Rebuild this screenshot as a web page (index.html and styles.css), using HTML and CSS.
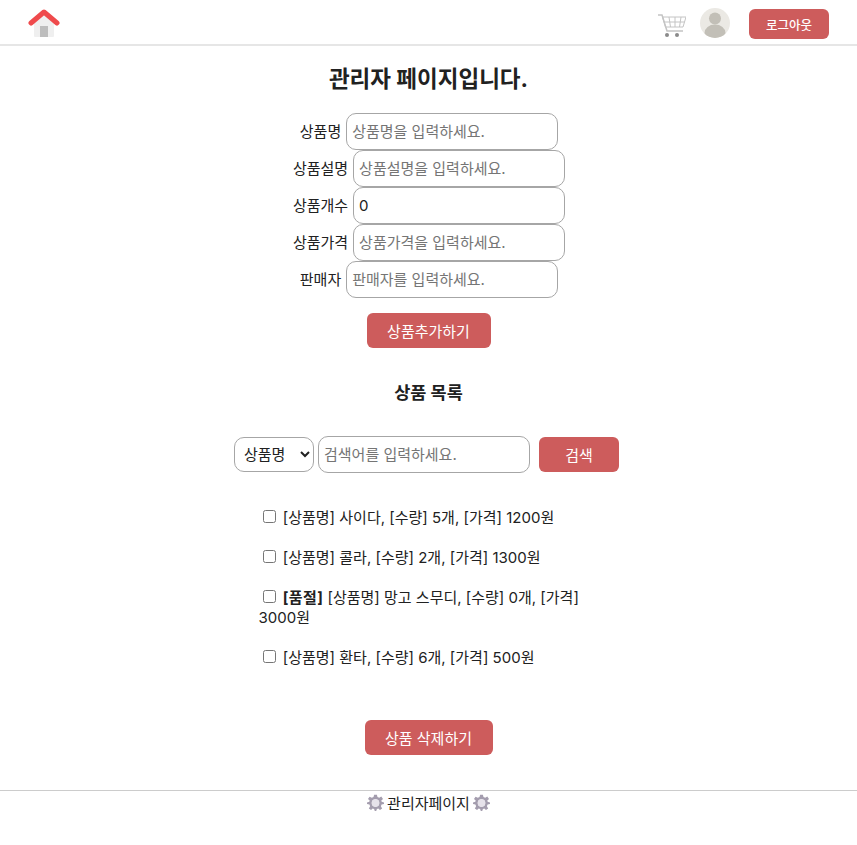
FILE: index.html
```html
<!DOCTYPE html>
<html lang="ko">
<head>
    <meta charset="UTF-8">
    <meta name="viewport" content="width=device-width, initial-scale=1.0">
    <title>관리자 페이지</title>
    <link rel="stylesheet" href="styles.css">
</head>
<body>
    <header class="top-bar">
        <a class="home-link" href="#">
            <svg width="32" height="32" viewBox="0 0 32 32">
                <path d="M6 15 L16 7 L26 15 V30 Q26 31 25 31 H7 Q6 31 6 30 Z" fill="#efefef"/>
                <rect x="12" y="20" width="8" height="11" fill="#bdbdbd"/>
                <path d="M3 17 L16 6 L29 17" fill="none" stroke="#ef4a4c" stroke-width="5" stroke-linecap="round" stroke-linejoin="round"/>
            </svg>
        </a>
        <div class="top-actions">
            <svg class="cart" width="28" height="24" viewBox="0 0 28 24" fill="none" stroke="#c4c4c4" stroke-width="1">
                <path d="M0 2 H4 L9 18 H25" stroke-width="1.5"/>
                <path d="M4.5 4 H28 L25 14 H7.5 Z"/>
                <path d="M6 9 H26.5 M11 4 L12.5 14 M17 4 V14 M23 4 L21.5 14"/>
                <circle cx="9" cy="22" r="2" fill="#8a8a8a" stroke="none"/>
                <circle cx="19" cy="22" r="2" fill="#8a8a8a" stroke="none"/>
            </svg>
            <svg class="avatar" width="30" height="30" viewBox="0 0 30 30">
                <defs><clipPath id="avatar-clip"><circle cx="15" cy="15" r="15"/></clipPath></defs>
                <circle cx="15" cy="15" r="15" fill="#ebe9e4"/>
                <g clip-path="url(#avatar-clip)" fill="#c2bfb7">
                    <circle cx="15" cy="10.5" r="6"/>
                    <ellipse cx="15" cy="25" rx="10.5" ry="8.5"/>
                </g>
            </svg>
            <button class="btn btn-small">로그아웃</button>
        </div>
    </header>

    <main class="content">
        <h1 class="page-title">관리자 페이지입니다.</h1>

        <div class="form-row"><label>상품명</label> <input class="text-input" type="text" placeholder="상품명을 입력하세요."></div>
        <div class="form-row"><label>상품설명</label> <input class="text-input" type="text" placeholder="상품설명을 입력하세요."></div>
        <div class="form-row"><label>상품개수</label> <input class="text-input" type="text" value="0"></div>
        <div class="form-row"><label>상품가격</label> <input class="text-input" type="text" placeholder="상품가격을 입력하세요."></div>
        <div class="form-row"><label>판매자</label> <input class="text-input" type="text" placeholder="판매자를 입력하세요."></div>

        <button class="btn btn-add">상품추가하기</button>

        <h2 class="list-title">상품 목록</h2>

        <div class="search-row">
            <select class="search-select">
                <option>상품명</option>
            </select>
            <input class="text-input" type="text" placeholder="검색어를 입력하세요.">
            <button class="btn btn-search">검색</button>
        </div>

        <ul class="product-list">
            <li><input class="item-check" type="checkbox"> [상품명] 사이다, [수량] 5개, [가격] 1200원</li>
            <li><input class="item-check" type="checkbox"> [상품명] 콜라, [수량] 2개, [가격] 1300원</li>
            <li><input class="item-check" type="checkbox"> <b class="sold-out">[품절]</b> [상품명] 망고 스무디, [수량] 0개, [가격] 3000원</li>
            <li><input class="item-check" type="checkbox"> [상품명] 환타, [수량] 6개, [가격] 500원</li>
        </ul>

        <button class="btn btn-delete">상품 삭제하기</button>
    </main>

    <footer class="page-footer">
        <svg class="gear" width="17" height="17" viewBox="0 0 24 24">
            <path fill-rule="evenodd" fill="#a49dae" d="M10 1 H14 L14.8 4.4 L17.2 5.4 L20.2 3.6 L20.4 3.8 L22.6 6.9 L20.2 9.1 L20.7 11 L24 12 V14 L20.6 14.9 L19.6 17.3 L21.4 20.3 L18.3 22.6 L16 20.4 L14 21 L13 24 H11 L10 21 L8 20.4 L5.7 22.6 L2.6 20.3 L4.4 17.3 L3.4 14.9 L0 14 V12 L3.3 11 L3.8 9.1 L1.4 6.9 L3.6 3.8 L6.8 5.4 L9.2 4.4 Z M12 7.5 A5.3 5.3 0 1 0 12 18.1 A5.3 5.3 0 1 0 12 7.5 Z"/>
            <circle cx="12" cy="12.8" r="5.3" fill="#e6e2ea"/>
        </svg>
        <span>관리자페이지</span>
        <svg class="gear" width="17" height="17" viewBox="0 0 24 24">
            <path fill-rule="evenodd" fill="#a49dae" d="M10 1 H14 L14.8 4.4 L17.2 5.4 L20.2 3.6 L20.4 3.8 L22.6 6.9 L20.2 9.1 L20.7 11 L24 12 V14 L20.6 14.9 L19.6 17.3 L21.4 20.3 L18.3 22.6 L16 20.4 L14 21 L13 24 H11 L10 21 L8 20.4 L5.7 22.6 L2.6 20.3 L4.4 17.3 L3.4 14.9 L0 14 V12 L3.3 11 L3.8 9.1 L1.4 6.9 L3.6 3.8 L6.8 5.4 L9.2 4.4 Z M12 7.5 A5.3 5.3 0 1 0 12 18.1 A5.3 5.3 0 1 0 12 7.5 Z"/>
            <circle cx="12" cy="12.8" r="5.3" fill="#e6e2ea"/>
        </svg>
    </footer>
</body>
</html>
```

FILE: styles.css
```css
body {
    margin: 0;
    font-family: Inter, "Noto Sans CJK KR", sans-serif;
    font-size: 15px;
    color: #212121;
    background-color: #fff;
}

.top-bar {
    height: 44px;
    border-bottom: 2px solid #e6e6e6;
    display: flex;
    align-items: center;
    justify-content: space-between;
    padding: 0 28px;
}

.home-link {
    display: flex;
}

.top-actions {
    display: flex;
    align-items: center;
}

.cart {
    margin: 6px 14px 0 0;
}

.avatar {
    margin: 2px 19px 0 0;
}

.content {
    display: flex;
    flex-direction: column;
    align-items: center;
}

.page-title {
    margin: 18px 0 19px;
    font-size: 22.5px;
    line-height: 30px;
    font-weight: 700;
}

.form-row {
    height: 37px;
    display: flex;
    align-items: center;
    gap: 5px;
    margin-left: 1px;
}

.form-row label {
    margin-top: -2px;
}

.text-input {
    width: 212px;
    height: 37px;
    box-sizing: border-box;
    padding: 0 5px;
    border: 1px solid #a6a6a6;
    border-radius: 10px;
    font: inherit;
    color: #212121;
    background-color: #fff;
}

.text-input::placeholder {
    color: #757575;
}

.btn {
    border: none;
    border-radius: 6px;
    background-color: #cd5c5c;
    color: #fff;
    font: inherit;
    padding: 0;
}

.btn-small {
    width: 80px;
    height: 30px;
    margin-top: 4px;
    font-size: 12.5px;
    font-weight: 500;
}

.btn-add {
    width: 124px;
    height: 35px;
    margin-top: 15px;
}

.list-title {
    margin: 34px 0 0;
    font-size: 17.5px;
    line-height: 22px;
    font-weight: 700;
}

.search-row {
    display: flex;
    align-items: center;
    gap: 4px;
    margin: 32px 4px 0 0;
}

.search-select {
    width: 80px;
    height: 35px;
    padding: 0 4px 0 5px;
    border: 1px solid #a6a6a6;
    border-radius: 10px;
    font: inherit;
    color: #212121;
    background-color: #fff;
}

.btn-search {
    width: 80px;
    height: 35px;
    margin-left: 5px;
}

.product-list {
    list-style: none;
    width: 340px;
    margin: 35px 0 0;
    padding: 0;
}

.product-list li {
    line-height: 20px;
    margin-bottom: 20px;
}

.item-check {
    margin-top: 0;
}

.sold-out {
    letter-spacing: 0.4px;
}

.btn-delete {
    width: 128px;
    height: 35px;
    margin-top: 32px;
}

.page-footer {
    margin-top: 35px;
    border-top: 1px solid #ccc;
    display: flex;
    justify-content: center;
    align-items: center;
    gap: 3px;
    height: 22px;
    font-size: 15px;
}
```
